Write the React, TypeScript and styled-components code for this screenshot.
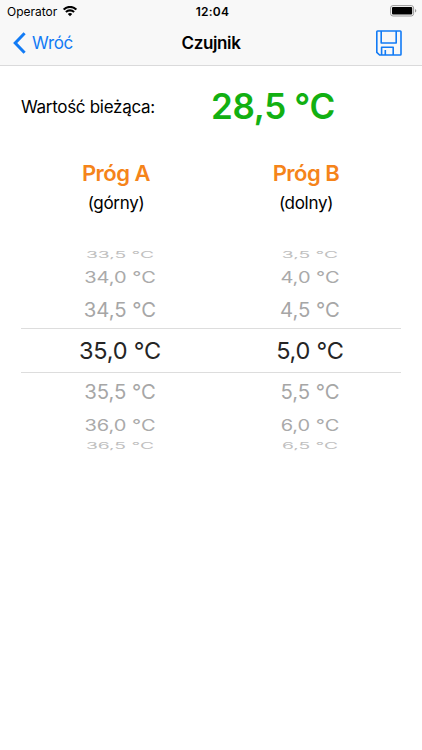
import React from "react";
import styled, { createGlobalStyle } from "styled-components";

const GlobalStyle = createGlobalStyle`
  * { box-sizing: border-box; }
  body {
    margin: 0;
    background: #fff;
    color: #000;
    font-family: Inter, "Liberation Sans", sans-serif;
  }
`;

const Screen = styled.main`
  width: 422px;
  height: 750px;
  overflow: hidden;
  background: #fff;
`;

const Header = styled.header`
  height: 66px;
  background: #f8f8f8;
  border-bottom: 1px solid #dadadb;
`;

const StatusBar = styled.div`
  display: grid;
  grid-template-columns: 1fr auto 1fr;
  align-items: center;
  height: 22px;
  padding: 0 5px 0 7px;
`;

const Carrier = styled.div`
  display: flex;
  align-items: center;
  gap: 6px;
  font-size: 12px;
  letter-spacing: -0.02px;
`;

const Clock = styled.time`
  padding-left: 1px;
  font-size: 12px;
  font-weight: 600;
  letter-spacing: 0.2px;
`;

const Battery = styled.svg`
  justify-self: end;
`;

const NavBar = styled.nav`
  display: grid;
  grid-template-columns: 1fr auto 1fr;
  align-items: center;
  height: 42px;
  padding: 0 13px;
`;

const BackButton = styled.button`
  display: flex;
  align-items: center;
  gap: 6px;
  padding: 0;
  border: 0;
  background: none;
  color: #127bf5;
  font: 400 17px/22px Inter, sans-serif;
  letter-spacing: -0.3px;
`;

const Title = styled.h1`
  margin: 0;
  font-size: 17px;
  font-weight: 600;
  letter-spacing: -0.35px;
`;

const SaveButton = styled.button`
  display: flex;
  justify-self: end;
  margin-right: 7px;
  padding: 0;
  border: 0;
  background: none;
  color: #127bf5;
`;

const Current = styled.section`
  display: grid;
  grid-template-columns: 190px 1fr;
  align-items: center;
  height: 82px;
  padding-left: 21px;
`;

const CurrentLabel = styled.span`
  font-size: 17px;
  letter-spacing: -0.3px;
`;

const CurrentValue = styled.strong`
  padding-bottom: 2px;
  color: #12b012;
  font-size: 35px;
  font-weight: 600;
  letter-spacing: -0.35px;
`;

const Thresholds = styled.section`
  display: grid;
  grid-template-columns: 190px 190px;
  margin-left: 21px;
`;

const Threshold = styled.div`
  display: flex;
  flex-direction: column;
  align-items: center;
  padding-top: 10px;
`;

const ThresholdName = styled.h2`
  margin: 0;
  color: #f5841a;
  font-size: 22px;
  font-weight: 600;
  line-height: 30px;
  letter-spacing: -0.5px;
`;

const ThresholdKind = styled.span`
  font-size: 17px;
  line-height: 30px;
  letter-spacing: -0.3px;
`;

const Picker = styled.section`
  width: 380px;
  margin: 30px 21px 0;
`;

const PickerRow = styled.div<{ $height: number; $selected?: boolean }>`
  display: grid;
  grid-template: 100% / 1fr 1fr;
  align-items: center;
  justify-items: center;
  height: ${(p) => p.$height}px;
  border: solid #dddddd;
  border-width: ${(p) => (p.$selected ? "1px 0" : "0")};
`;

const Reading = styled.span<{
  $size: number;
  $squash: number;
  $color: string;
  $spacing: number;
}>`
  padding-left: 8px;
  color: ${(p) => p.$color};
  font-size: ${(p) => p.$size}px;
  line-height: 1;
  letter-spacing: ${(p) => p.$spacing}px;
  white-space: nowrap;
  transform: scaleY(${(p) => p.$squash});
`;

const rows = [
  { values: ["33,5 °C", "3,5 °C"], height: 15, size: 19.2, squash: 0.44, color: "#c0c0c0", spacing: 0 },
  { values: ["34,0 °C", "4,0 °C"], height: 29, size: 20, squash: 0.77, color: "#aaaaaa", spacing: 0 },
  { values: ["34,5 °C", "4,5 °C"], height: 36, size: 20.3, squash: 0.97, color: "#a6a6a6", spacing: 0 },
  { values: ["35,0 °C", "5,0 °C"], height: 45, size: 23.5, squash: 1, color: "#252525", spacing: -0.2, selected: true },
  { values: ["35,5 °C", "5,5 °C"], height: 38, size: 20.3, squash: 0.97, color: "#a6a6a6", spacing: 0 },
  { values: ["36,0 °C", "6,0 °C"], height: 29, size: 20, squash: 0.77, color: "#aaaaaa", spacing: 0 },
  { values: ["36,5 °C", "6,5 °C"], height: 13, size: 19.2, squash: 0.44, color: "#c0c0c0", spacing: 0 },
];

const WifiIcon = () => (
  <svg width="14" height="11" viewBox="0 0 14 11" fill="none" stroke="#000" strokeWidth="2.1">
    <path d="M.7 3.6C4.3 0 9.7 0 13.3 3.6" />
    <path d="M2.9 6c2.3-2.2 5.9-2.2 8.2 0" />
    <path d="M4.8 7.9c1.2-1.2 3.2-1.2 4.4 0L7 10.2Z" fill="#000" stroke="none" />
  </svg>
);

const BatteryIcon = () => (
  <Battery width="27" height="12" viewBox="0 0 27 12">
    <rect x=".6" y=".6" width="23" height="10.4" rx="2.4" fill="none" stroke="#999" />
    <rect x="2" y="2" width="20.2" height="7.6" rx="1" fill="#000" />
    <path d="M25 4v3.6c1.8-.6 1.8-3 0-3.6Z" fill="#999" />
  </Battery>
);

const ChevronIcon = () => (
  <svg width="13" height="22" viewBox="0 0 13 22" fill="none" stroke="currentColor" strokeWidth="3">
    <path d="M11.6 1.3 2.2 11l9.4 9.7" />
  </svg>
);

const FloppyIcon = () => (
  <svg width="26" height="26" viewBox="0 0 26 26" fill="none" stroke="currentColor" strokeWidth="1.6" strokeLinejoin="round">
    <path d="M1.6 1h22.6q.8 0 .8.8v22.4q0 .8-.8.8H3.6L.8 22.4V1.8Q.8 1 1.6 1Z" />
    <path d="M5.2 1v12h15V1M5.6 25v-7.8h11.6V25M9.3 25v-5" />
  </svg>
);

export default function App() {
  return (
    <Screen>
      <GlobalStyle />
      <Header>
        <StatusBar>
          <Carrier>
            <span>Operator</span>
            <WifiIcon />
          </Carrier>
          <Clock>12:04</Clock>
          <BatteryIcon />
        </StatusBar>
        <NavBar>
          <BackButton>
            <ChevronIcon />
            <span>Wróć</span>
          </BackButton>
          <Title>Czujnik</Title>
          <SaveButton aria-label="Zapisz">
            <FloppyIcon />
          </SaveButton>
        </NavBar>
      </Header>
      <Current>
        <CurrentLabel>Wartość bieżąca:</CurrentLabel>
        <CurrentValue>28,5 °C</CurrentValue>
      </Current>
      <Thresholds>
        <Threshold>
          <ThresholdName>Próg A</ThresholdName>
          <ThresholdKind>(górny)</ThresholdKind>
        </Threshold>
        <Threshold>
          <ThresholdName>Próg B</ThresholdName>
          <ThresholdKind>(dolny)</ThresholdKind>
        </Threshold>
      </Thresholds>
      <Picker>
        {rows.map((row) => (
          <PickerRow key={row.values[0]} $height={row.height} $selected={row.selected}>
            {row.values.map((value) => (
              <Reading
                key={value}
                $size={row.size}
                $squash={row.squash}
                $color={row.color}
                $spacing={row.spacing}
              >
                {value}
              </Reading>
            ))}
          </PickerRow>
        ))}
      </Picker>
    </Screen>
  );
}
